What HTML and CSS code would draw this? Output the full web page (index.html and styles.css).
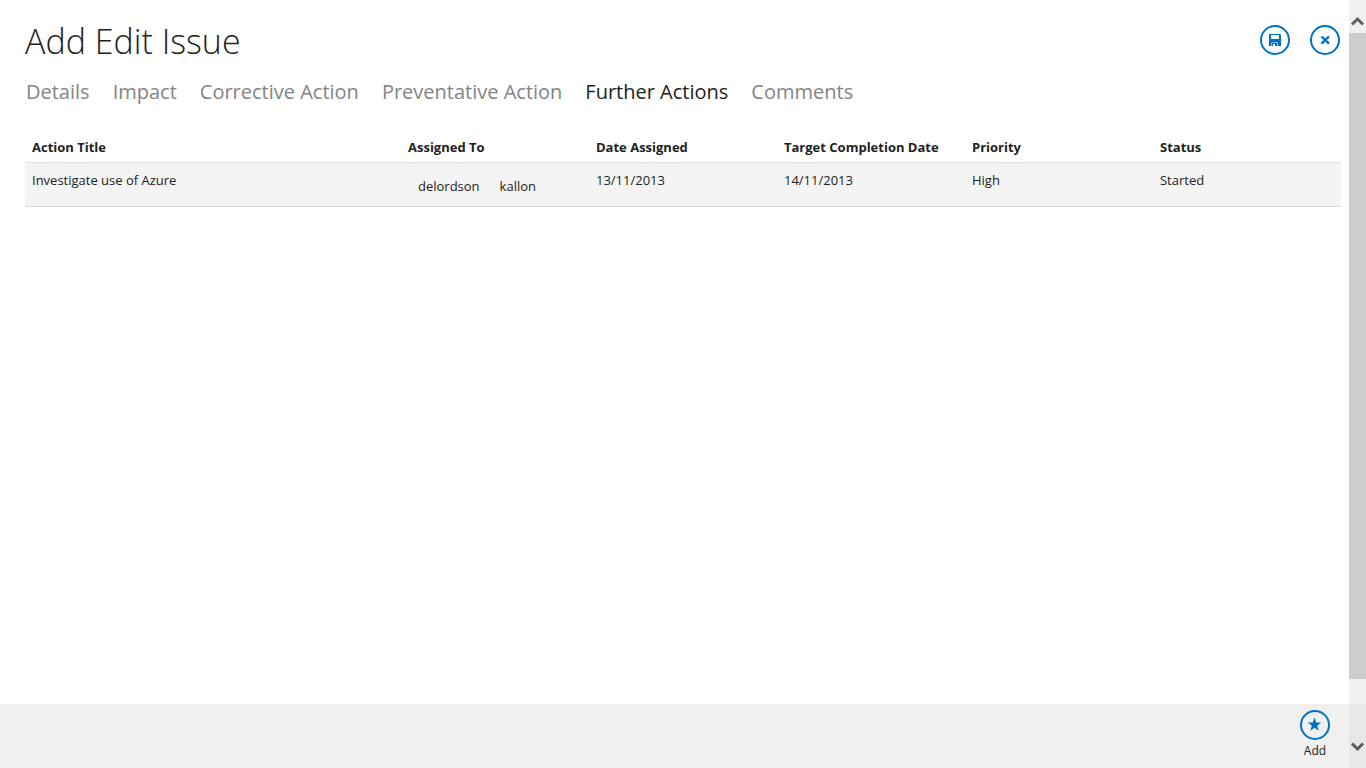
FILE: index.html
```html
<!DOCTYPE html>
<html lang="en">
<head>
<meta charset="utf-8">
<meta name="viewport" content="width=device-width, initial-scale=1">
<title>Add Edit Issue</title>
<link rel="stylesheet" href="styles.css">
</head>
<body>
<div class="app">
  <div class="screen">
    <header class="header">
      <h1 class="title">Add Edit Issue</h1>
      <div class="commands">
        <button class="round-button" type="button" aria-label="Save">
          <svg width="30" height="30" viewBox="0 0 30 30" aria-hidden="true">
            <circle cx="15" cy="15" r="14" fill="none" stroke="#0072c6" stroke-width="2"/>
            <path fill="#0072c6" fill-rule="evenodd" d="M9 9h11l1 1v11h-3v-3.500h-6.500V21H9zM11 10v4h8v-4zM12 18h5.500v3H15v-2h-2v2h-1z"/>
          </svg>
        </button>
        <button class="round-button" type="button" aria-label="Close">
          <svg width="30" height="30" viewBox="0 0 30 30" aria-hidden="true">
            <circle cx="15" cy="15" r="14" fill="none" stroke="#0072c6" stroke-width="2"/>
            <path d="M11.500 11.500l7.500 7.200M19 11.500l-7.500 7.200" stroke="#0072c6" stroke-width="2.400"/>
          </svg>
        </button>
      </div>
    </header>
    <nav class="tabs" aria-label="Issue sections">
      <a class="tab" href="#details">Details</a>
      <a class="tab" href="#impact">Impact</a>
      <a class="tab" href="#corrective">Corrective Action</a>
      <a class="tab" href="#preventative">Preventative Action</a>
      <a class="tab tab-active" href="#further" aria-current="page">Further Actions</a>
      <a class="tab" href="#comments">Comments</a>
    </nav>
    <main class="content">
      <table class="actions">
        <thead>
          <tr>
            <th class="col-title" scope="col">Action Title</th>
            <th scope="col">Assigned To</th>
            <th scope="col">Date Assigned</th>
            <th scope="col">Target Completion Date</th>
            <th scope="col">Priority</th>
            <th scope="col">Status</th>
          </tr>
        </thead>
        <tbody>
          <tr>
            <td>Investigate use of Azure</td>
            <td><div class="people"><span>delordson</span><span>kallon</span></div></td>
            <td>13/11/2013</td>
            <td>14/11/2013</td>
            <td>High</td>
            <td>Started</td>
          </tr>
        </tbody>
      </table>
    </main>
    <footer class="command-bar">
      <button class="add-button" type="button">
        <svg width="30" height="30" viewBox="0 0 30 30" aria-hidden="true">
          <circle cx="15" cy="15" r="14" fill="none" stroke="#0072c6" stroke-width="2"/>
          <path fill="#0072c6" d="M14.500 7.500l1.700 5h5.100l-4.100 3.200 1.500 5.100-4.200-3-4.200 3 1.500-5.100-4.100-3.200h5.100z"/>
        </svg>
        <span>Add</span>
      </button>
    </footer>
  </div>
  <div class="scrollbar" aria-hidden="true">
    <div class="scroll-up">
      <svg width="17" height="12" viewBox="0 0 17 12"><path d="M3 9.500l5.500-5.500 5.500 5.500" fill="none" stroke="#606060" stroke-width="3"/></svg>
    </div>
    <div class="scroll-thumb"></div>
    <div class="scroll-down">
      <svg width="17" height="12" viewBox="0 0 17 12"><path d="M3 2.500l5.500 5.500 5.500-5.500" fill="none" stroke="#5a5a5a" stroke-width="3"/></svg>
    </div>
  </div>
</div>
</body>
</html>
```
FILE: styles.css
```css
* {
  box-sizing: border-box;
}

body {
  margin: 0;
  background: #fff;
  color: #222;
  font-family: "Open Sans", "Noto Sans", sans-serif;
  font-size: 13px;
  line-height: 20px;
}

button {
  padding: 0;
  border: 0;
  background: none;
  color: inherit;
  font: inherit;
  cursor: pointer;
}

svg {
  display: block;
}

.app {
  display: flex;
  min-height: 100vh;
}

.screen {
  flex: 1;
  display: flex;
  flex-direction: column;
  min-width: 0;
}

.header {
  display: flex;
  justify-content: space-between;
  align-items: flex-start;
  padding: 17px 9px 0 25px;
}

.title {
  margin: 0;
  font-size: 34px;
  line-height: 48px;
  font-weight: 300;
}

.commands {
  display: flex;
  gap: 20px;
  padding-top: 8px;
}

.tabs {
  display: flex;
  gap: 23px;
  padding: 11px 8px 0 26px;
  font-size: 20px;
  line-height: 32px;
  white-space: nowrap;
}

.tab {
  color: #848484;
  text-decoration: none;
}

.tab-active {
  color: #222;
}

.content {
  flex: 1;
  padding: 24px 8px 0 25px;
}

.actions {
  width: 100%;
  table-layout: fixed;
  border-collapse: collapse;
  text-align: left;
}

.col-title {
  width: 28.5714%;
}

.actions th {
  padding: 5px 7px;
  font-weight: 700;
  white-space: nowrap;
  border-bottom: 1px solid #e1e1e1;
}

.actions td {
  height: 44px;
  padding: 7px 7px 4px;
  vertical-align: top;
  background: #f4f4f4;
  border-bottom: 1px solid #d9d9d9;
}

.people {
  display: flex;
  gap: 20px;
  padding: 6px 10px 0;
}

.command-bar {
  display: flex;
  justify-content: flex-end;
  align-items: flex-start;
  height: 64px;
  padding: 6px 19px 0;
  background: #f0f0f0;
}

.add-button {
  display: flex;
  flex-direction: column;
  align-items: center;
  gap: 1px;
  width: 30px;
  font-size: 12px;
  line-height: 20px;
}

.scrollbar {
  display: flex;
  flex-direction: column;
  width: 17px;
  background: #f0f0f0;
}

.scroll-up {
  height: 33px;
  padding-top: 15px;
}

.scroll-thumb {
  flex: 1;
  margin-bottom: 25px;
  background: #cdcdcd;
}

.scroll-down {
  height: 64px;
  padding-top: 37px;
  background: #e7e7e7;
}
```
